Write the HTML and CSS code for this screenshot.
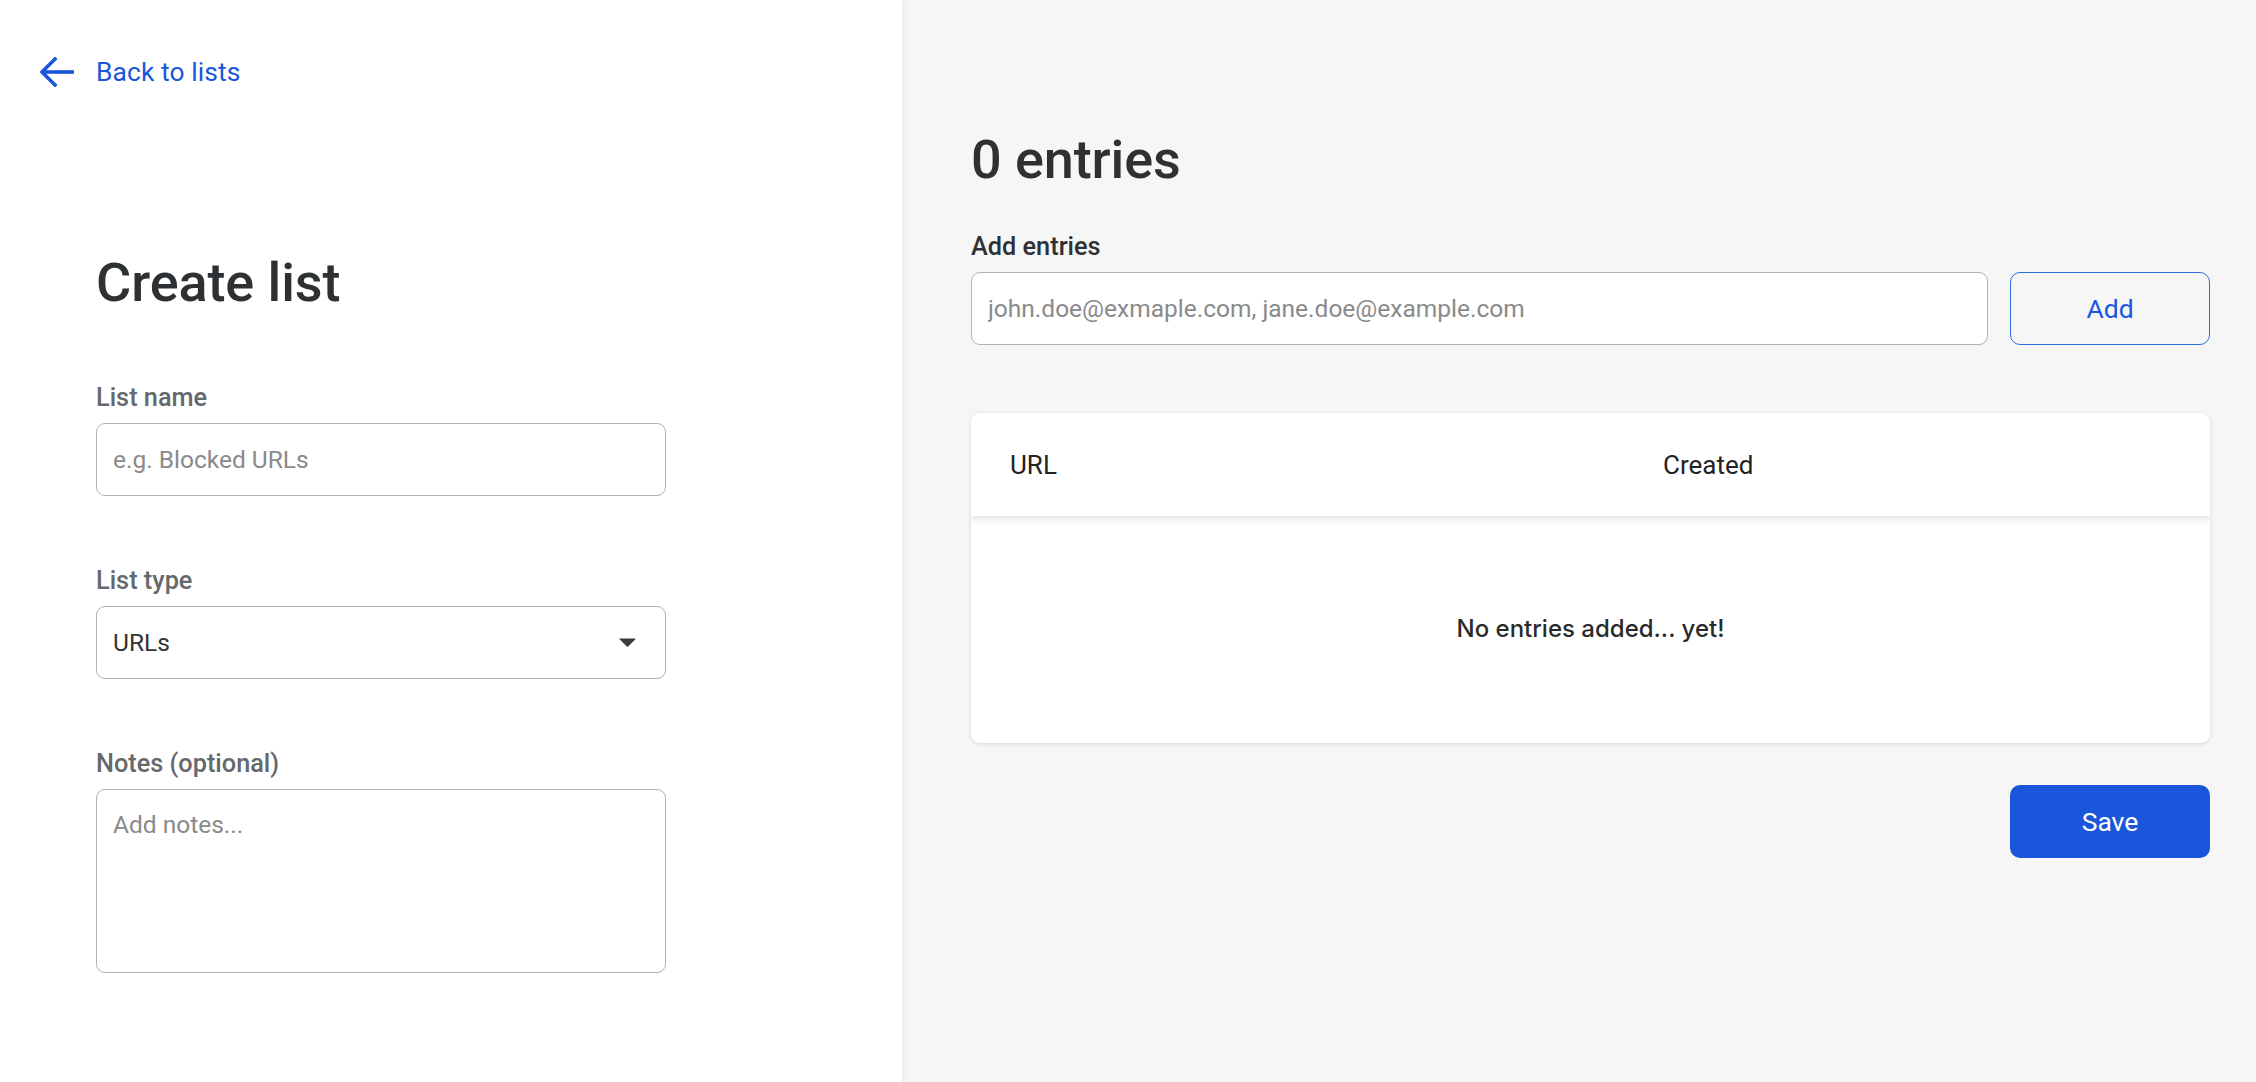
FILE: index.html
```html
<!DOCTYPE html>
<html lang="en">
<head>
<meta charset="utf-8">
<title>Create list</title>
<link rel="stylesheet" href="styles.css">
</head>
<body>
<div class="page">
  <aside class="left">
    <a class="back" href="#">
      <svg class="back-icon" width="36" height="30" viewBox="0 0 36 30" aria-hidden="true">
        <polyline points="16,2 3,15 16,28" fill="none" stroke="#1a56db" stroke-width="3.6" stroke-linecap="square" stroke-linejoin="miter"/>
        <line x1="4" y1="15" x2="35" y2="15" stroke="#1a56db" stroke-width="3.6"/>
      </svg>
      <span>Back to lists</span>
    </a>
    <div class="form">
      <h1 class="title">Create list</h1>
      <div class="field">
        <label class="label">List name</label>
        <input class="input" type="text" placeholder="e.g. Blocked URLs">
      </div>
      <div class="field">
        <label class="label">List type</label>
        <div class="select">
          <span>URLs</span>
          <svg width="17" height="9" viewBox="0 0 17 9" aria-hidden="true"><path d="M1 0.5 H16 Q17 0.5 16.2 1.4 L9.2 8.4 Q8.5 9 7.8 8.4 L0.8 1.4 Q0 0.5 1 0.5 Z" fill="#3c3c3c"/></svg>
        </div>
      </div>
      <div class="field">
        <label class="label">Notes (optional)</label>
        <textarea class="input textarea" placeholder="Add notes..."></textarea>
      </div>
    </div>
  </aside>
  <main class="right">
    <h2 class="title">0 entries</h2>
    <label class="label dark">Add entries</label>
    <div class="add-row">
      <input class="input grow" type="text" placeholder="john.doe@exmaple.com, jane.doe@example.com">
      <button class="btn outline">Add</button>
    </div>
    <div class="card">
      <div class="thead">
        <span>URL</span>
        <span>Created</span>
      </div>
      <div class="empty">No entries added... yet!</div>
    </div>
    <div class="actions">
      <button class="btn primary">Save</button>
    </div>
  </main>
</div>
</body>
</html>
```
FILE: styles.css
```css
* { box-sizing: border-box; }
html, body {
  margin: 0;
  padding: 0;
  height: 100%;
}
body {
  font-family: Roboto, "Liberation Sans", Arial, sans-serif;
  color: #2e3133;
  background: #f6f6f6;
}
.page {
  display: flex;
  height: 1082px;
  overflow: hidden;
}
.left {
  width: 902px;
  flex: none;
  background: #ffffff;
  padding: 52px 0 0 39px;
  position: relative;
  z-index: 1;
  box-shadow: 1px 0 6px rgba(0, 0, 0, 0.07);
}
.back {
  display: flex;
  align-items: center;
  gap: 21px;
  height: 40px;
  color: #1a56db;
  text-decoration: none;
  font-size: 26.4px;
  letter-spacing: 0.1px;
}
.back-icon { flex: none; }
.form {
  margin-top: 160px;
  padding-left: 57px;
  width: 627px;
  display: flex;
  flex-direction: column;
}
.title {
  margin: 0;
  font-size: 54px;
  line-height: 61px;
  font-weight: 500;
  color: #2e3133;
  letter-spacing: -0.1px;
}
.left .title { margin-bottom: 70px; }
.field {
  display: flex;
  flex-direction: column;
  margin-bottom: 70px;
}
.label {
  display: block;
  font-size: 25.3px;
  line-height: 30px;
  font-weight: 500;
  color: #65686c;
  margin-bottom: 10px;
}
.label.dark { color: #2e3133; }
.input {
  height: 73px;
  width: 100%;
  border: 1.5px solid #b2b2b2;
  border-radius: 9px;
  background: #fff;
  padding: 0 16px;
  font-family: inherit;
  font-size: 24.5px;
  color: #333;
  outline: none;
}
.input::placeholder { color: #8a8a8a; }
.textarea {
  height: 184px;
  padding: 20px 16px;
  resize: none;
  line-height: 30px;
}
.select {
  height: 73px;
  border: 1.5px solid #b2b2b2;
  border-radius: 9px;
  background: #fff;
  padding: 0 29px 0 16px;
  display: flex;
  align-items: center;
  justify-content: space-between;
  font-size: 24.5px;
  color: #333;
}
.right {
  flex: 1;
  background: #f6f6f6;
  padding: 129px 46px 0 69px;
  display: flex;
  flex-direction: column;
}
.right .title { margin-bottom: 42px; }
.add-row {
  display: flex;
  gap: 22px;
}
.grow { flex: 1; }
.btn {
  height: 73px;
  width: 200px;
  border-radius: 10px;
  font-family: inherit;
  font-size: 26.5px;
  cursor: pointer;
}
.btn.outline {
  background: #f6f6f7;
  border: 1.8px solid #2f6ce0;
  color: #1a56db;
}
.btn.primary {
  background: #1a56db;
  border: none;
  color: #fff;
}
.card {
  margin-top: 68px;
  background: #fff;
  border-radius: 9px;
  box-shadow: 0 1px 4px rgba(0, 0, 0, 0.13);
  overflow: hidden;
}
.thead {
  height: 103px;
  display: grid;
  grid-template-columns: 653px 1fr;
  align-items: center;
  padding-left: 39px;
  font-size: 26px;
  color: #222;
  box-shadow: 0 3px 7px rgba(0, 0, 0, 0.12);
  position: relative;
}
.empty {
  height: 227px;
  display: flex;
  align-items: center;
  justify-content: center;
  font-family: Inter, Roboto, "Liberation Sans", sans-serif;
  font-size: 24px;
  font-weight: 500;
  color: #2a2a2a;
  padding-bottom: 2px;
}
.actions {
  margin-top: 42px;
  display: flex;
  justify-content: flex-end;
}
```
